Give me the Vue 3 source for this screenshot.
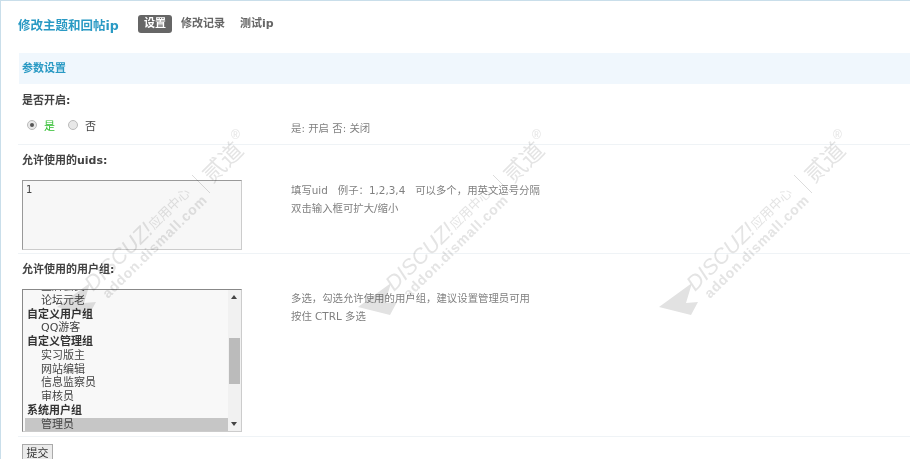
<script setup>
const tabs = [
  { label: '设置', active: true },
  { label: '修改记录' },
  { label: '测试ip' },
]
const groups = [
  { text: '金牌会员', child: true },
  { text: '论坛元老', child: true },
  { text: '自定义用户组' },
  { text: 'QQ游客', child: true },
  { text: '自定义管理组' },
  { text: '实习版主', child: true },
  { text: '网站编辑', child: true },
  { text: '信息监察员', child: true },
  { text: '审核员', child: true },
  { text: '系统用户组' },
  { text: '管理员', child: true, selected: true },
]
const marks = [-602, -301, 0]
</script>

<template>
  <div class="page">
    <header class="head">
      <h1 class="title">修改主题和回帖ip</h1>
      <nav class="tabs">
        <span v-for="t in tabs" :key="t.label" class="tab" :class="{ active: t.active }">{{ t.label }}</span>
      </nav>
    </header>

    <h2 class="section">参数设置</h2>

    <section class="row row-radio">
      <div class="label">是否开启:</div>
      <div class="body">
        <div class="field radios">
          <span class="radio on"></span><span class="yes">是</span>
          <span class="radio"></span><span class="no">否</span>
        </div>
        <div class="note">是: 开启 否: 关闭</div>
      </div>
    </section>

    <section class="row row-uids">
      <div class="label">允许使用的uids:</div>
      <div class="body">
        <div class="field"><div class="textarea">1</div></div>
        <div class="note">
          <p>填写uid&nbsp;&nbsp; 例子：1,2,3,4&nbsp;&nbsp; 可以多个，用英文逗号分隔</p>
          <p>双击输入框可扩大/缩小</p>
        </div>
      </div>
    </section>

    <section class="row row-groups">
      <div class="label">允许使用的用户组:</div>
      <div class="body">
        <div class="field">
          <div class="listbox">
            <div class="options">
              <div
                v-for="g in groups"
                :key="g.text"
                class="option"
                :class="{ child: g.child, selected: g.selected }"
              >{{ g.text }}</div>
            </div>
            <div class="scrollbar">
              <span class="arrow up"></span>
              <span class="thumb"></span>
              <span class="arrow down"></span>
            </div>
          </div>
        </div>
        <div class="note">
          <p>多选，勾选允许使用的用户组，建议设置管理员可用</p>
          <p>按住 CTRL 多选</p>
        </div>
      </div>
    </section>

    <div class="actions"><button class="submit" type="button">提交</button></div>

    <svg class="watermarks" width="910" height="459" viewBox="0 0 910 459" aria-hidden="true">
      <g v-for="x in marks" :key="x" :transform="`translate(${x} 0)`" class="mark">
        <polygon points="659,307 692,283 686,303 698,302 691,315" />
        <text class="wm-brand" transform="translate(695 292) rotate(-44.5)">DISCUZ!</text>
        <text class="wm-cn" transform="translate(756 230) rotate(-44.5)">应用中心</text>
        <line x1="794" y1="175" x2="812" y2="193" />
        <text class="wm-big" transform="translate(814 184) rotate(-44.5)">贰道</text>
        <text class="wm-url" transform="translate(710 299) rotate(-44.5)">addon.dismall.com</text>
        <text class="wm-r" x="833" y="139">®</text>
      </g>
    </svg>
  </div>
</template>

<style scoped>
.page {
  position: relative;
  box-sizing: border-box;
  width: 910px;
  height: 459px;
  overflow: hidden;
  padding-left: 18px;
  background: #fff;
  border-top: 1px solid #c9deea;
  border-left: 1px solid #c9deea;
  font-family: "DejaVu Sans", "Noto Sans CJK SC", sans-serif;
  font-size: 11px;
  color: #444;
}
.page > * { margin-left: -1px; }
.head {
  display: flex;
  align-items: center;
  height: 52px;
  padding-bottom: 6px;
  box-sizing: border-box;
}
.title {
  margin: 0;
  width: 120px;
  font-size: 12.5px;
  font-weight: 700;
  color: #2a9ac4;
  white-space: nowrap;
}
.tabs { display: flex; align-items: center; gap: 3px; font-weight: 700; }
.tab {
  padding: 0 6px;
  height: 18px;
  line-height: 17px;
  color: #666;
  white-space: nowrap;
}
.tab.active {
  background: #666;
  color: #fff;
  border-radius: 3px;
}
.section {
  margin: 0;
  height: 31px;
  padding-left: 3px;
  line-height: 32px;
  font-size: 11px;
  font-weight: 700;
  color: #2a9ac4;
  background: #f0f7fd;
}
.row {
  box-sizing: border-box;
  padding-left: 4px;
  border-bottom: 1px solid #eff3f6;
}
.row-radio { height: 61px; padding-top: 10px; }
.row-uids { height: 109px; padding-top: 9px; }
.row-groups { height: 183px; padding-top: 9px; }
.label { font-weight: 700; line-height: 14px; color: #444; }
.body { display: flex; }
.field { box-sizing: border-box; width: 269px; flex: none; }
.row-radio .body { margin-top: 10px; }
.row-uids .body { margin-top: 12px; }
.row-groups .body { margin-top: 12px; }
.radios { display: flex; align-items: center; height: 14px; padding-left: 5px; }
.radio {
  box-sizing: border-box;
  width: 10px;
  height: 10px;
  border-radius: 50%;
  border: 1px solid #bbb;
  background: #e8e8e8;
  position: relative;
}
.radio.on::after {
  content: "";
  position: absolute;
  left: 2px;
  top: 2px;
  width: 4px;
  height: 4px;
  border-radius: 50%;
  background: #555;
}
.yes { color: #2fbe2f; margin: 0 13px 0 7px; }
.no { margin-left: 7px; }
.note { color: #808080; font-size: 10.4px; line-height: 18px; }
.row-radio .note { padding-top: 1px; }
.row-uids .note { padding-top: 1px; }
.note p { margin: 0; }
.textarea {
  box-sizing: border-box;
  width: 220px;
  height: 70px;
  padding: 2px 3px;
  background: #f7f7f7;
  border: 1px solid #ccc;
  border-top-color: #999;
  border-left-color: #999;
  line-height: 14px;
  font-size: 10px;
}
.listbox {
  display: flex;
  box-sizing: border-box;
  width: 220px;
  height: 143px;
  background: #f8f8f8;
  border: 1px solid #ccc;
  border-top-color: #888;
  border-left-color: #888;
  overflow: hidden;
}
.options { flex: 1; padding: 0 0 0 2px; margin-top: -10px; min-width: 0; }
.option { height: 13.75px; line-height: 13.75px; padding-left: 2px; font-weight: 700; color: #333; white-space: nowrap; }
.option.child { padding-left: 16px; font-weight: 400; color: #444; }
.option.selected { background: #c6c6c6; height: 16px; }
.scrollbar {
  position: relative;
  width: 13px;
  flex: none;
  background: #f1f1f1;
}
.thumb {
  position: absolute;
  left: 1px;
  top: 48px;
  width: 11px;
  height: 46px;
  background: #bbb;
}
.arrow {
  position: absolute;
  left: 3px;
  width: 0;
  height: 0;
  border-left: 3.5px solid transparent;
  border-right: 3.5px solid transparent;
}
.arrow.up { top: 5px; border-bottom: 4px solid #444; }
.arrow.down { bottom: 5px; border-top: 4px solid #444; }
.actions { padding: 7px 0 0 4px; }
.submit {
  display: block;
  box-sizing: border-box;
  width: 31px;
  height: 16px;
  padding: 0;
  font: inherit;
  line-height: 17px;
  color: #333;
  background: #ebebeb;
  border: 1px solid #aaa;
  border-bottom: 0;
  border-radius: 0;
}
.watermarks {
  position: absolute;
  left: 0;
  top: 0;
  margin: -1px 0 0 -1px;
  pointer-events: none;
  mix-blend-mode: multiply;
}
.mark polygon { fill: #e2e2e2; }
.mark line { stroke: #dcdcdc; stroke-width: 1; }
.mark text { fill: #e4e4e4; font-family: "Liberation Sans", "Noto Sans CJK SC", sans-serif; }
.wm-brand { font-size: 21.5px; font-style: italic; font-weight: 400; }
.wm-cn { font-size: 13px; }
.wm-big { font-size: 23px; }
.wm-url { font-size: 14px; font-weight: 700; letter-spacing: 0.8px; }
.wm-r { font-size: 12px; }
</style>
